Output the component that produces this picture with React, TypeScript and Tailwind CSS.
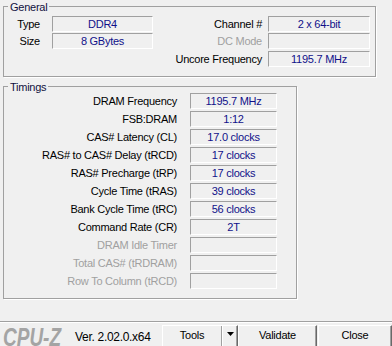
import React from 'react';

const valueBox =
  'h-[16px] border border-t-[#a0a0a0] border-l-[#a0a0a0] border-b-white border-r-white flex items-center justify-center text-[#10108a] leading-[11px]';

function Value({ text, w }: { text?: string; w: string }) {
  return <div className={`${valueBox} ${w}`}>{text}</div>;
}

const timings: { label: string; value?: string; disabled?: boolean }[] = [
  { label: 'DRAM Frequency', value: '1195.7 MHz' },
  { label: 'FSB:DRAM', value: '1:12' },
  { label: 'CAS# Latency (CL)', value: '17.0 clocks' },
  { label: 'RAS# to CAS# Delay (tRCD)', value: '17 clocks' },
  { label: 'RAS# Precharge (tRP)', value: '17 clocks' },
  { label: 'Cycle Time (tRAS)', value: '39 clocks' },
  { label: 'Bank Cycle Time (tRC)', value: '56 clocks' },
  { label: 'Command Rate (CR)', value: '2T' },
  { label: 'DRAM Idle Timer', disabled: true },
  { label: 'Total CAS# (tRDRAM)', disabled: true },
  { label: 'Row To Column (tRCD)', disabled: true },
];

const btn =
  'shrink-0 h-[23px] border border-t-white border-l-white border-b-[#696969] border-r-[#696969] bg-[#f0f0f0] shadow-[inset_-1px_-1px_0_#a0a0a0]';

export default function App() {
  return (
    <div className="w-[392px] h-[346px] bg-[#f0f0f0] overflow-hidden font-['Liberation_Sans',Arial,sans-serif] text-[11px] tracking-[-0.25px] text-black select-none">
      {/* General */}
      <div className="relative mt-[6px] ml-[3px] w-[373px] h-[71px] border border-[#a0a0a0] shadow-[1px_1px_0_#ffffff]">
        <span className="absolute -top-[5px] left-[4px] px-[2px] bg-[#f0f0f0] leading-[11px] text-[#101040]">
          General
        </span>
        <div className="pt-[9px] flex flex-col gap-[1px]">
          <div className="flex items-center h-[16px]">
            <div className="w-[36px] text-right leading-[11px]">Type</div>
            <div className="ml-[12px]">
              <Value text="DDR4" w="w-[101px]" />
            </div>
            <div className="w-[109px] text-right leading-[11px]">Channel #</div>
            <div className="ml-[6px]">
              <Value text="2 x 64-bit" w="w-[102px]" />
            </div>
          </div>
          <div className="flex items-center h-[16px]">
            <div className="w-[36px] text-right leading-[11px]">Size</div>
            <div className="ml-[12px]">
              <Value text="8 GBytes" w="w-[101px]" />
            </div>
            <div className="w-[109px] text-right leading-[11px] text-[#a0a0a0]">DC Mode</div>
            <div className="ml-[6px]">
              <Value w="w-[102px]" />
            </div>
          </div>
          <div className="flex items-center h-[16px] mt-[1px]">
            <div className="w-[258px] text-right leading-[11px]">Uncore Frequency</div>
            <div className="ml-[6px]">
              <Value text="1195.7 MHz" w="w-[102px]" />
            </div>
          </div>
        </div>
      </div>

      {/* Timings */}
      <div className="relative mt-[9px] ml-[3px] w-[294px] h-[213px] border border-[#a0a0a0] shadow-[1px_1px_0_#ffffff]">
        <span className="absolute -top-[5px] left-[4px] px-[2px] bg-[#f0f0f0] leading-[11px] text-[#101040]">
          Timings
        </span>
        <div className="pt-[6px] flex flex-col gap-[2px]">
          {timings.map((t) => (
            <div key={t.label} className="flex items-center h-[16px]">
              <div
                className={`w-[173px] text-right leading-[11px] ${t.disabled ? 'text-[#a0a0a0]' : 'text-black'}`}
              >
                {t.label}
              </div>
              <div className="ml-[13px]">
                <Value text={t.value} w="w-[87px]" />
              </div>
            </div>
          ))}
        </div>
      </div>

      {/* Bottom bar */}
      <div className="mt-[22px] h-[1px] bg-[#a0a0a0]" />
      <div className="h-[1px] bg-white" />
      <div className="flex items-start mt-[2px] w-[392px]">
        <div className="shrink-0 ml-[3px] w-[57px]">
          <div className="origin-left scale-x-[0.76] text-[25px] leading-[25px] font-bold italic text-[#a4a4a4] tracking-normal whitespace-nowrap">
            CPU-Z
          </div>
        </div>
        <div className="shrink-0 ml-[15px] w-[73px] mt-[6px] text-[12px] leading-[12px] tracking-[-0.3px] whitespace-nowrap">
          Ver. 2.02.0.x64
        </div>
        <div className={`${btn} ml-[14px] w-[76px] flex`}>
          <div className="flex-1 flex items-center justify-center leading-[11px] pb-[2px]">Tools</div>
          <div className="w-[1px] bg-[#a0a0a0]" />
          <div className="w-[1px] bg-white" />
          <div className="w-[14px] flex items-start justify-center pt-[6px]">
            <svg width="7" height="4" viewBox="0 0 7 4">
              <polygon points="0,0 7,0 3.5,4" fill="#000" />
            </svg>
          </div>
        </div>
        <div className={`${btn} w-[79px] flex items-center justify-center leading-[11px] pb-[2px]`}>
          Validate
        </div>
        <div className={`${btn} ml-[1px] w-[74px] flex items-center justify-center leading-[11px] pb-[2px]`}>
          Close
        </div>
      </div>
    </div>
  );
}
